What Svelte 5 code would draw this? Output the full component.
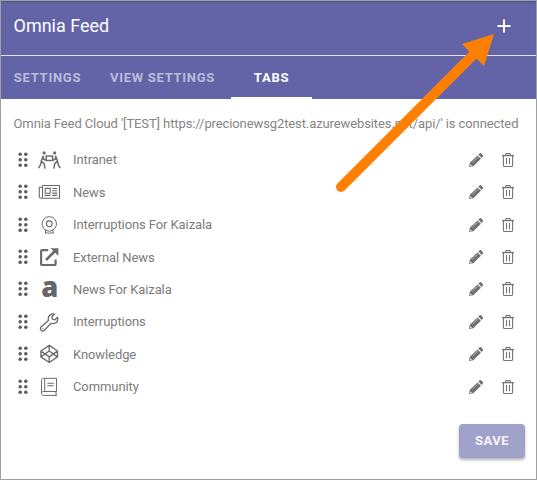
<script>
  const rows = [
    { label: 'Intranet', icon: 'carry' },
    { label: 'News', icon: 'news' },
    { label: 'Interruptions For Kaizala', icon: 'badge' },
    { label: 'External News', icon: 'external' },
    { label: 'News For Kaizala', icon: 'letter' },
    { label: 'Interruptions', icon: 'wrench' },
    { label: 'Knowledge', icon: 'codepen' },
    { label: 'Community', icon: 'book' }
  ];
</script>

<div class="panel">
  <header>
    <h1>Omnia Feed</h1>
    <button class="add" aria-label="Add tab">
      <svg width="14" height="14" viewBox="0 0 14 14"><path d="M7 .5v13M.5 7h13" stroke="#fff" stroke-width="2" /></svg>
    </button>
  </header>
  <nav>
    <span class="tab first">SETTINGS</span>
    <span class="tab second">VIEW SETTINGS</span>
    <span class="tab active">TABS</span>
  </nav>
  <main>
    <p>Omnia Feed Cloud '[TEST] https://precionewsg2test.azurewebsites.net/api/' is connected</p>
    <div class="list">
      {#each rows as row}
        <div class="row">
          <svg class="drag" width="10" height="16" viewBox="0 0 10 16" fill="#5e5e5e">
            {#each [2.3, 7.8, 13.3] as y}
              <circle cx="2.2" cy={y} r="1.8" /><circle cx="7.8" cy={y} r="1.8" />
            {/each}
          </svg>
          <svg class="icon" width="24" height="48" viewBox="0 -14 24 48" fill="none" stroke="#6c6c6c" stroke-width="1.2" stroke-linejoin="round">
            {#if row.icon === 'carry'}
              <g fill="#6c6c6c" stroke="none"><circle cx="7.2" cy="2.9" r="1.6" /><circle cx="17.6" cy="2.9" r="1.6" /></g>
              <path d="M9.2 6.1h6.4v4.5H9.2z" stroke-width="1.5" />
              <path d="M9.5 10.4 6.6 9.3l-.5-3.1L4.2 11.2l2.9 2.4.9 5M4.2 11.6l-.7 3.3-2 3.3M15.3 10.4l2.9-1.1.5-3.1 1.9 5-2.9 2.4-.9 5M20.6 11.6l.7 3.3 2 3.3" stroke-width="1.5" />
            {:else if row.icon === 'news'}
              <path d="M5.5 3.5h17v12.7H4.2c-1.2 0-1.9-.7-1.9-1.8V5.3h3.2M5.5 3.5v10.9c0 1.1-.5 1.8-1.3 1.8" stroke-width="1.1" />
              <path d="M8.2 6.4h5v4.8h-5zM15.2 6.5h5M15.2 8.8h5M15.2 11.1h5M7.6 13.4h5.8M15.2 13.4h5" stroke-width="1.1" />
            {:else if row.icon === 'badge'}
              <path d="M8.9 15.2a7.2 7.2 0 1 1 6.8 0" stroke-width="1" /><circle cx="12.3" cy="8.8" r="2.9" stroke-width="1.1" />
              <path d="m8.8 14.4-.4 4 2.1-.7 1.8.7 1.8-.7 2.1.7-.4-4M9 15.3l3.3 1 3.3-1" stroke-width="1" />
            {:else if row.icon === 'external'}
              <path d="M11.2 3.2H5.2c-.7 0-1.1.4-1.1 1.1v12.6c0 .7.4 1.1 1.1 1.1h12.3c.7 0 1.1-.4 1.1-1.1v-4.4" stroke-width="2.2" />
              <path d="m9 13 10-10" stroke-width="2.6" /><path d="M13.4 1.2h8v7.5l-2.7-2.5-2.8-2.6z" fill="#6c6c6c" stroke="none" />
            {:else if row.icon === 'letter'}
              <text x="4.2" y="17.8" textLength="17" lengthAdjust="spacingAndGlyphs" fill="#666" stroke="none" font-family="Open Sans, sans-serif" font-size="28" font-weight="800">a</text>
            {:else if row.icon === 'wrench'}
              <path d="m4.2 14.8 7.2-6.4c-.8-2.9.8-5.9 3.6-6.4.9-.2 1.7-.1 2.4.2l-2.5 2.5.5 2.5 2.6.6 2.5-2.5c.8 2.8-.5 5.3-3.1 6.1-1.1.4-2.3.3-3.3-.1l-6.7 6.9c-1 1-2.3.9-3.2.1-1-.9-1-2.5 0-3.5z" stroke-width="1.35" />
              <circle cx="5.9" cy="16.6" r=".6" fill="#6c6c6c" stroke="none" />
            {:else if row.icon === 'codepen'}
              <path d="m12.2 1.4 8.3 5.6v5.9l-8.3 5.6-8.3-5.6V7zM12.2 1.4v5.6M12.2 12.9v5.6M3.9 7l8.3 5.9L20.5 7M3.9 12.9 12.2 7l8.3 5.9" stroke-width="1.35" />
            {:else}
              <path d="M19.5 14.5V1.3H6.4c-1.2 0-1.9.8-1.9 1.8v13.4c0 1.2.8 1.9 2 1.9h13v-1M19.5 14.5H6.3c-1.1 0-1.8.7-1.8 1.8M7.7 1.5v12.8M19 14.7v3.2" stroke-width="1" />
              <path d="M10.4 6.2h6.4M10.4 8.8h6.4" stroke-width="1.1" />
            {/if}
          </svg>
          <span class="label">{row.label}</span>
          <svg class="edit" width="16" height="16" viewBox="0 0 16 16" fill="#707070">
            <path d="m1 15 .8-4.3 7.7-7.3 3.4 3.4-7.6 7.4zM10.3 2.6l1.3-1.2c.5-.5 1.1-.5 1.6 0l1.6 1.6c.5.5.5 1.1 0 1.6l-1.2 1.3z" />
            <path d="m4.4 10.1 5.4-5.1" stroke="#ddd" stroke-width=".6" /><path d="m2.3 12.2 1.7 1.7-1.9.4z" fill="#fff" />
          </svg>
          <svg class="delete" width="14" height="16" viewBox="0 0 14 16" fill="none" stroke="#747474" stroke-width="1.1">
            <path d="M1 3.6h12M4.4 3.4l.7-1.8h3.8l.7 1.8M2.4 3.7v9.5c0 .8.5 1.3 1.3 1.3h6.6c.8 0 1.3-.5 1.3-1.3V3.7M5.5 6v6.2M8.5 6v6.2" />
          </svg>
        </div>
      {/each}
    </div>
    <button class="save">SAVE</button>
  </main>
  <svg class="arrow" width="537" height="480" viewBox="0 0 537 480">
    <path d="M341 187 474 54" stroke="#ff8000" stroke-width="10" stroke-linecap="round" />
    <path d="m494 34-32 10 22 22z" fill="#ff8000" />
  </svg>
</div>

<style>
  .panel {
    position: relative;
    box-sizing: border-box;
    width: 537px;
    height: 480px;
    border: 1px solid #a0a0a0;
    background: #fff;
    font-family: Roboto, sans-serif;
    overflow: hidden;
  }
  header {
    box-sizing: border-box;
    height: 55px;
    display: flex;
    align-items: center;
    justify-content: space-between;
    padding: 0 25.5px 4px 12.5px;
    background: #6264a7;
    border-bottom: 1px solid #e0e0ee;
    box-shadow: inset 0 2px 2px -1px #4e5085;
  }
  h1 { margin: 0; color: #fff; font-size: 18px; font-weight: 400; line-height: 24px; }
  button { border: 0; padding: 0; font-family: inherit; }
  .add { width: 14px; height: 14px; background: none; display: flex; }
  nav { height: 43px; display: flex; background: #6264a7; }
  .tab {
    box-sizing: border-box;
    height: 43px;
    text-align: center;
    color: #bbbcdb;
    font-size: 13px;
    font-weight: 700;
    line-height: 43px;
    letter-spacing: .72px;
    white-space: nowrap;
  }
  .first { width: 93px; }
  .second { width: 137px; }
  .active { width: 81px; color: #fff; border-bottom: 2px solid #fff; }
  main { display: flex; flex-direction: column; }
  p { margin: 16px 0 0 12.5px; font-size: 13px; line-height: 18px; letter-spacing: -.103px; color: #858585; white-space: nowrap; }
  .list { padding-top: 10.7px; }
  .row { height: 32.4px; display: flex; align-items: center; color: #7c7c7c; font-size: 13px; }
  .drag { margin-left: 17px; }
  .icon { flex: none; margin-left: 9px; }
  .label { margin-left: 12px; flex: 1; letter-spacing: -.09px; }
  .edit { margin-right: 17.3px; }
  .delete { margin-right: 21px; }
  .save {
    align-self: flex-end;
    width: 66px;
    height: 34px;
    margin: 21px 11px 0 0;
    border-radius: 4px;
    background: #a1a2ca;
    color: #f4f4fa;
    font-size: 13px;
    font-weight: 700;
    letter-spacing: .5px;
    box-shadow: 0 2px 3px rgba(0, 0, 0, .3);
  }
  .arrow { position: absolute; left: -1px; top: -1px; pointer-events: none; }
</style>
